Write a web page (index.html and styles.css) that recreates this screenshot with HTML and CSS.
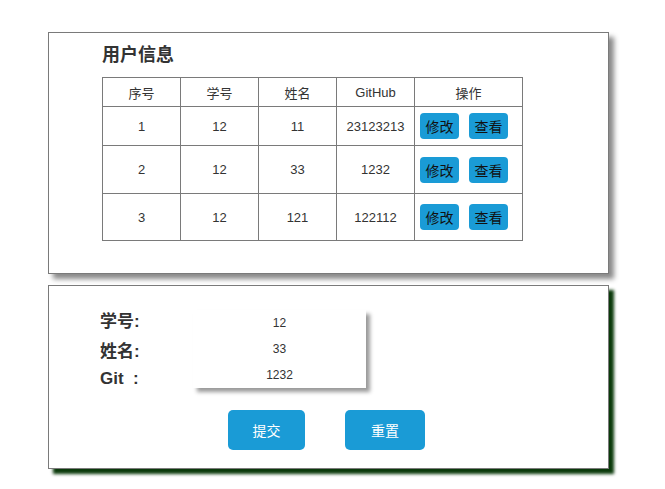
FILE: index.html
```html
<!DOCTYPE html>
<html lang="zh">
<head>
<meta charset="utf-8">
<title>用户信息</title>
<link rel="stylesheet" href="styles.css">
</head>
<body>
<div class="card card-list">
  <h2 class="title">用户信息</h2>
  <table class="users">
    <colgroup>
      <col class="c-n"><col class="c-n"><col class="c-n"><col class="c-n"><col class="c-op">
    </colgroup>
    <tr class="r-head"><td>序号</td><td>学号</td><td>姓名</td><td>GitHub</td><td>操作</td></tr>
    <tr class="r-1"><td>1</td><td>12</td><td>11</td><td>23123213</td><td><div class="ops"><button class="tbtn">修改</button><button class="tbtn">查看</button></div></td></tr>
    <tr class="r-2"><td>2</td><td>12</td><td>33</td><td>1232</td><td><div class="ops"><button class="tbtn">修改</button><button class="tbtn">查看</button></div></td></tr>
    <tr class="r-3"><td>3</td><td>12</td><td>121</td><td>122112</td><td><div class="ops"><button class="tbtn">修改</button><button class="tbtn">查看</button></div></td></tr>
  </table>
</div>
<div class="card card-form">
  <div class="form">
    <div class="labels">
      <div class="lab l1">学号:</div>
      <div class="lab l2">姓名:</div>
      <div class="lab l3">Git &nbsp;:</div>
    </div>
    <div class="values">
      <div class="val">12</div>
      <div class="val">33</div>
      <div class="val">1232</div>
    </div>
  </div>
  <div class="actions">
    <button class="btn btn-submit">提交</button>
    <button class="btn btn-reset">重置</button>
  </div>
</div>
</body>
</html>
```
FILE: styles.css
```css
* { box-sizing: border-box; }
html { height: 100%; }
body {
  margin: 0;
  min-height: 100%;
  padding: 32px 0 20px 48px;
  background: #fff;
  font-family: "Liberation Sans", "Noto Sans CJK SC", sans-serif;
  color: #333;
}
.card {
  width: 561px;
  background: #fff;
  border: 1px solid #7a7a7a;
}
.card-list {
  height: 242px;
  padding: 10px 0 0 53px;
  box-shadow: 5px 5px 5px #8a8a8a;
}
.title {
  margin: 0 0 10px 0;
  font-size: 18px;
  line-height: 24px;
  font-weight: bold;
  color: #333;
}
.users {
  border-collapse: collapse;
  table-layout: fixed;
  width: 421px;
  font-size: 13px;
  color: #333;
}
.c-n { width: 78px; }
.c-op { width: 108px; }
.users td {
  border: 1px solid #7a7a7a;
  text-align: center;
  vertical-align: middle;
  padding: 0;
}
.r-head td { height: 29px; }
.r-1 td { height: 39px; }
.r-2 td { height: 48px; }
.r-3 td { height: 47px; }
.ops {
  display: flex;
  justify-content: flex-start;
  gap: 10px;
  padding-left: 5px;
}
.tbtn {
  width: 39px;
  height: 26px;
  padding: 0;
  border: none;
  border-radius: 4px;
  background: #1a9bd6;
  color: #111;
  font-family: "Liberation Sans", "Noto Sans CJK SC", sans-serif;
  font-size: 14px;
}
.card-form {
  margin-top: 11px;
  height: 184px;
  padding: 21px 0 0 51px;
  box-shadow: 5px 5px 3px #0b3a0b;
}
.form {
  display: flex;
  align-items: flex-start;
}
.labels {
  width: 93px;
  font-size: 17px;
  font-weight: bold;
  color: #333;
}
.lab { line-height: 30px; }
.l3 { line-height: 24px; }
.values {
  margin-top: 3px;
  width: 173px;
  box-shadow: 4px 4px 4px #9a9a9a;
  font-size: 12px;
  color: #333;
  text-align: center;
}
.val { line-height: 26px; }
.actions {
  margin: 19px 0 0 128px;
  display: flex;
  gap: 40px;
}
.btn {
  height: 40px;
  border: none;
  border-radius: 5px;
  background: #1a9bd6;
  color: #fff;
  font-family: "Liberation Sans", "Noto Sans CJK SC", sans-serif;
  font-size: 14px;
  padding: 0;
}
.btn-submit { width: 77px; }
.btn-reset { width: 80px; }
```
